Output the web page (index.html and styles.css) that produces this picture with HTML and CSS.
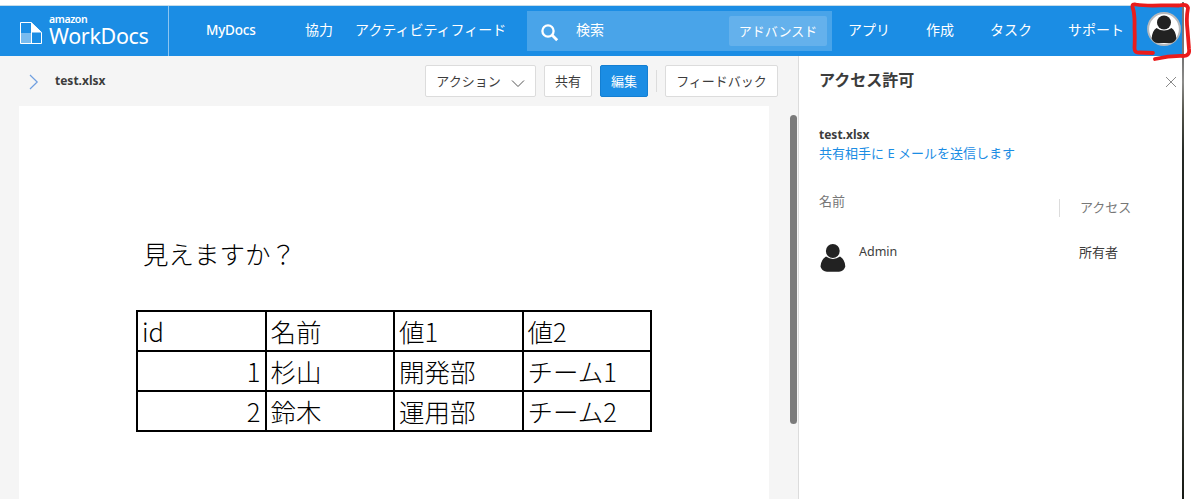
FILE: index.html
```html
<!DOCTYPE html>
<html lang="ja">
<head>
<meta charset="utf-8">
<title>Amazon WorkDocs</title>
<link rel="stylesheet" href="styles.css">
</head>
<body>
<div class="app">
  <header class="topbar">
    <div class="brand">
      <svg class="brand-mark" width="22" height="22" viewBox="0 0 22 22"><path d="M.5.5H11L21.500 10.500V21.500H.5Z" fill="none" stroke="#fff"/><path d="M11 0L22 10.500H11Z" fill="#fff"/><path d="M1 11H11V21H1Z" fill="#78bbef"/><path d="M11.500 10V21" stroke="#fff"/></svg>
      <div class="brand-text"><span class="brand-small">amazon</span><span class="brand-name">WorkDocs</span></div>
    </div>
    <nav class="nav-main"><a class="latin">MyDocs</a><a>協力</a><a>アクティビティフィード</a></nav>
    <div class="search">
      <svg width="20" height="20" viewBox="0 0 20 20" fill="none" stroke="#fff"><circle cx="8" cy="8" r="5.600" stroke-width="2.300"/><path d="M12 12L17.200 17.200" stroke-width="2.800"/></svg>
      <span class="search-label">検索</span>
      <span class="advanced">アドバンスド</span>
    </div>
    <nav class="nav-side"><a>アプリ</a><a>作成</a><a>タスク</a><a>サポート</a></nav>
    <svg class="avatar" width="34" height="34" viewBox="0 0 34 34"><circle cx="17" cy="17" r="15.900" fill="#fff" stroke="#b5b9bd" stroke-width="2"/><circle cx="17" cy="10.500" r="7" fill="#222"/><path d="M9.500 16Q17 21 24.500 16Q29 19 29.300 26.500C28.500 29 26 31 23 31H11C8 31 5.500 29 4.700 26.500Q5 19 9.500 16Z" fill="#222"/></svg>
  </header>
  <main class="workspace">
    <section class="viewer">
      <div class="toolbar">
        <svg class="chevron" width="10" height="16" viewBox="0 0 10 16" fill="none" stroke="#6f9fe0" stroke-width="1.200"><path d="M1 1L8.200 8L1 15"/></svg>
        <strong class="filename">test.xlsx</strong>
        <button class="btn action">アクション<svg width="14" height="9" viewBox="0 0 14 9" fill="none" stroke="#555"><path d="M1 1.500L7 7.500L13 1.500"/></svg></button>
        <button class="btn share">共有</button>
        <button class="btn primary">編集</button>
        <span class="divider"></span>
        <button class="btn feedback">フィードバック</button>
      </div>
      <div class="document">
        <p class="question">見えますか？</p>
        <table class="sheet">
          <tr><td>id</td><td>名前</td><td>値1</td><td>値2</td></tr>
          <tr><td class="num">1</td><td>杉山</td><td>開発部</td><td>チーム1</td></tr>
          <tr><td class="num">2</td><td>鈴木</td><td>運用部</td><td>チーム2</td></tr>
        </table>
      </div>
      <div class="scrollbar"></div>
    </section>
    <aside class="panel">
      <div class="panel-head"><h1>アクセス許可</h1><svg width="12" height="12" viewBox="0 0 12 12" stroke="#8a8a8a"><path d="M1 1L11 11M11 1L1 11"/></svg></div>
      <strong class="panel-file">test.xlsx</strong>
      <a class="mail">共有相手に E メールを送信します</a>
      <div class="columns"><span class="col-name">名前</span><span class="col-access">アクセス</span></div>
      <div class="member">
        <svg width="26" height="28" viewBox="0 0 26 28" fill="#222"><circle cx="12.800" cy="7" r="6.900"/><path d="M6 12.600Q13 17.500 20 12.600Q25 15.500 25.300 22.500C24.500 25.500 22 27.700 19 27.700H7C4 27.700 1.300 25.500.5 22.500Q1 15.500 6 12.600Z"/></svg>
        <span class="member-name">Admin</span><span class="member-role">所有者</span>
      </div>
    </aside>
  </main>
  <div class="edge"></div>
  <svg class="marker" width="69" height="64" viewBox="0 0 69 64" fill="none" stroke="#ea1c1c" stroke-width="3.800" stroke-linecap="round" stroke-linejoin="round"><path d="M31 53L17 52.500Q12.500 53 12.500 48Q13 38 12.500 27Q13 14 10.500 7Q10 3.500 14 4.500C28 7 42 4.500 57 5.500Q65 3.500 66 8Q64 18 65.500 30L67 49Q68 55 62 56Q48 55.500 33 59"/></svg>
</div>
</body>
</html>
```
FILE: styles.css
```css
* { box-sizing: border-box; }
body { margin: 0; background: #fff; color: #3c3c3c; font-family: "Noto Sans", "Noto Sans CJK JP", sans-serif; }
.app { position: relative; width: 1191px; height: 499px; overflow: hidden; padding-top: 5px; }
.topbar { display: flex; width: 1182px; height: 51px; border-top: 1px solid #c5dce9; background: #1b8de4; color: #fff; font-size: 14px; line-height: 20px; }
.brand { display: flex; width: 169px; height: 50px; padding: 16px 0 0 20px; border-right: 1px solid #8cc5f1; }
.brand-text { display: flex; flex-direction: column; margin: -9px 0 0 7px; }
.brand-small { font-size: 10.5px; line-height: 12px; font-weight: 600; letter-spacing: -.4px; }
.brand-name { font-size: 21.500px; line-height: 22px; letter-spacing: -.35px; }
.nav-main { display: flex; gap: 22px; width: 358px; padding: 14px 0 0 37px; }
.nav-main a, .nav-side a { flex: none; white-space: nowrap; }
.nav-main .latin { width: 77px; font-size: 13.5px; font-weight: 500; letter-spacing: -.2px; }
.search { display: flex; width: 305px; height: 40px; margin-top: 5px; padding: 5px 5px 0 13px; background: #49a4e9; }
.search svg { margin-top: 7px; }
.search-label { width: 169px; padding: 4px 0 0 16px; }
.advanced { width: 98px; height: 30px; padding-top: 5px; border-radius: 2px; background: #64b1ec; text-align: center; font-size: 13px; }
.nav-side { display: flex; gap: 36px; width: 314px; padding: 14px 0 0 16px; }
.avatar { flex: none; margin: 6px 0 0 1px; }
.workspace { display: flex; width: 1182px; height: 443px; }
.viewer { position: relative; width: 799px; background: #f5f5f5; border-right: 1px solid #dcdcdc; }
.toolbar { display: flex; height: 50px; padding: 9px 20px 0 29px; }
.chevron { margin-top: 9px; }
.filename { width: 386px; padding: 7px 0 0 16px; font-size: 12px; line-height: 18px; font-weight: 700; }
.btn { display: flex; align-items: center; justify-content: center; height: 32px; padding: 0; border: 1px solid #dcdcdc; border-radius: 2px; background: #fff; color: #3c3c3c; font: 13px/20px "Noto Sans CJK JP", sans-serif; white-space: nowrap; }
.action { width: 111px; gap: 10px; }
.action svg { margin-top: 5px; }
.share { width: 48px; margin-left: 8px; }
.primary { width: 48px; margin-left: 8px; background: #1b8de4; border-color: #147fd2; color: #fff; }
.divider { width: 1px; height: 22px; margin: 5px 8px 0; background: #dcdcdc; }
.feedback { width: 113px; }
.document { width: 750px; height: 393px; margin-left: 19px; padding: 129px 0 0 117px; background: #fff; color: #000; }
.question { margin: 0 0 39px 7px; font: 300 25.5px/36px "Noto Sans CJK JP", sans-serif; }
.sheet { border-collapse: collapse; table-layout: fixed; width: 516px; }
.sheet td { height: 40px; padding: 0 4px 0 4px; border: 2px solid #000; font: 300 25.5px/34px "Noto Sans CJK JP", sans-serif; white-space: nowrap; }
.sheet .num { text-align: right; }
.scrollbar { position: absolute; left: 790px; top: 59px; width: 7px; height: 309px; border-radius: 4px; background: #7b7b7b; }
.panel { display: flex; flex-direction: column; width: 383px; padding: 12px 5px 0 20px; font-size: 13px; line-height: 20px; }
.panel-head { display: flex; justify-content: space-between; height: 58px; }
.panel-head svg { margin-top: 8px; }
h1 { margin: 0; font-size: 16px; line-height: 24px; }
.panel-file { font-size: 12px; line-height: 17px; }
.mail { color: #1b8de4; white-space: nowrap; }
.columns { display: flex; margin-top: 28px; color: #777; }
.col-name { width: 240px; }
.col-access { height: 18px; margin-top: 8px; padding-left: 20px; border-left: 1px solid #dcdcdc; line-height: 17px; }
.member { display: flex; margin: 25px 0 0 2px; }
.member svg { margin-top: 2px; margin-left: -1px; }
.member-name { width: 233px; padding-left: 13px; font-size: 12.500px; }
.edge { position: absolute; left: 1182px; top: 2px; width: 2px; height: 497px; background: linear-gradient(#777 0 60px, #8d8d8b 80px, #55554c 110px, #252925 150px, #151a15 280px, #34372f 400px, #161914); }
.marker { position: absolute; left: 1122px; top: 0; }
```
